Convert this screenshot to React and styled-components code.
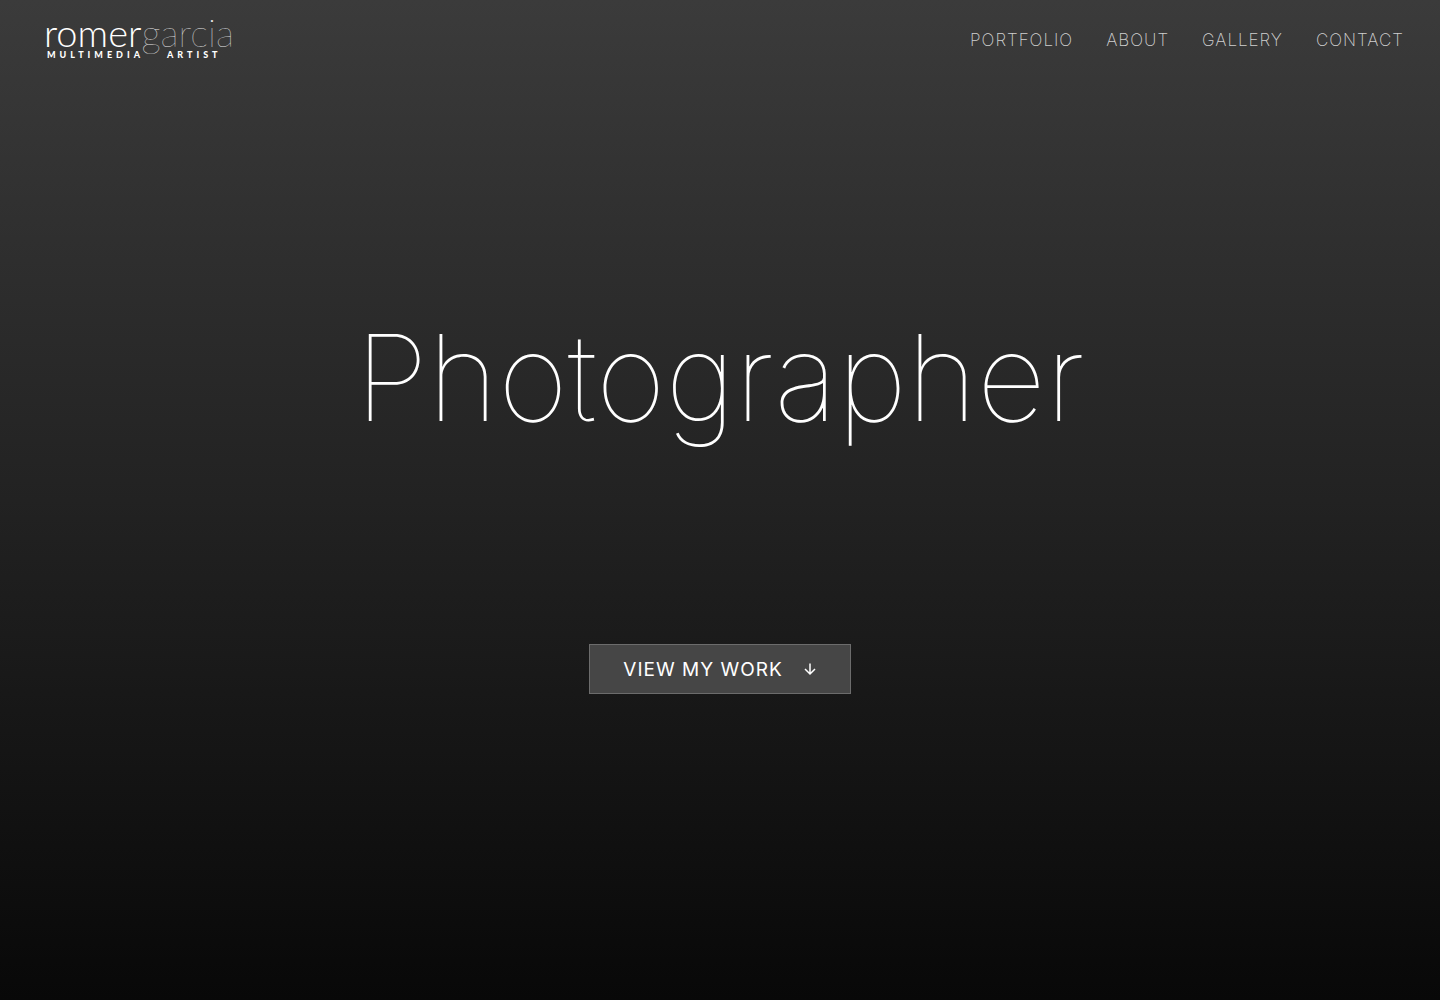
import styled, { createGlobalStyle } from "styled-components";

const NAV_LINKS = ["Portfolio", "About", "Gallery", "Contact"];

const GlobalStyle = createGlobalStyle`
    *, *::before, *::after {
        box-sizing: border-box;
    }

    body {
        background-color: #080808;
        color: #ffffff;
        font-family: "Inter", "Liberation Sans", sans-serif;
        margin: 0;
    }

    a {
        color: inherit;
        text-decoration: none;
    }
`;

const Page = styled.div`
    background: linear-gradient(180deg, #3b3b3b 0%, #222222 50%, #080808 100%);
    display: flex;
    flex-direction: column;
    min-height: 100vh;
`;

const Header = styled.header`
    align-items: center;
    display: flex;
    height: 80px;
    justify-content: space-between;
    padding: 0 36px 0 44px;
`;

const Logo = styled.a`
    display: flex;
    flex-direction: column;
    font-family: "Lato", sans-serif;
    padding-bottom: 6px;
`;

const Wordmark = styled.span`
    display: flex;
    font-size: 38px;
    font-weight: 300;
    line-height: 36px;

    > .last-name {
        font-weight: 100;
        opacity: 0.9;
    }
`;

const Tagline = styled.span`
    display: flex;
    font-size: 9px;
    font-weight: 900;
    gap: 23px;
    letter-spacing: 4px;
    line-height: 10px;
    padding-left: 3px;
    text-transform: uppercase;
`;

const Nav = styled.nav`
    display: flex;
    gap: 33px;

    > a {
        color: #d0d0d0;
        font-size: 17px;
        font-weight: 200;
        letter-spacing: 1px;
        line-height: 24px;
        text-transform: uppercase;
    }
`;

const Hero = styled.main`
    align-items: center;
    display: flex;
    flex: 1;
    flex-direction: column;
    gap: 176px;
    padding: 208px 24px 48px;
`;

const Title = styled.h1`
    font-size: 120px;
    font-weight: 100;
    line-height: 180px;
    margin: 0;
`;

const WorkButton = styled.button`
    align-items: center;
    background-color: #464646;
    border: 1px solid #6c6c6c;
    color: #ffffff;
    cursor: pointer;
    display: flex;
    font-family: inherit;
    font-size: 19px;
    font-weight: 400;
    gap: 20px;
    height: 50px;
    letter-spacing: 1px;
    padding: 0 33px;
    text-transform: uppercase;
`;

const ArrowDown = () => (
    <svg width="14" height="14" viewBox="0 0 14 14" fill="none" stroke="currentColor" strokeWidth="1.5" aria-hidden="true">
        <path d="M7 1.5V12M2 7 7 12 12 7" />
    </svg>
);

const App = () => {
    return (
        <Page>
            <GlobalStyle />
            <Header>
                <Logo href="#home">
                    <Wordmark>
                        <span>romer</span>
                        <span className="last-name">garcia</span>
                    </Wordmark>
                    <Tagline>
                        <span>Multimedia</span>
                        <span>Artist</span>
                    </Tagline>
                </Logo>
                <Nav>
                    { NAV_LINKS.map((link) => <a key={link} href={`#${link.toLowerCase()}`}>{link}</a>) }
                </Nav>
            </Header>
            <Hero>
                <Title>Photographer</Title>
                <WorkButton type="button">
                    View my work
                    <ArrowDown />
                </WorkButton>
            </Hero>
        </Page>
    )
}

export default App;
